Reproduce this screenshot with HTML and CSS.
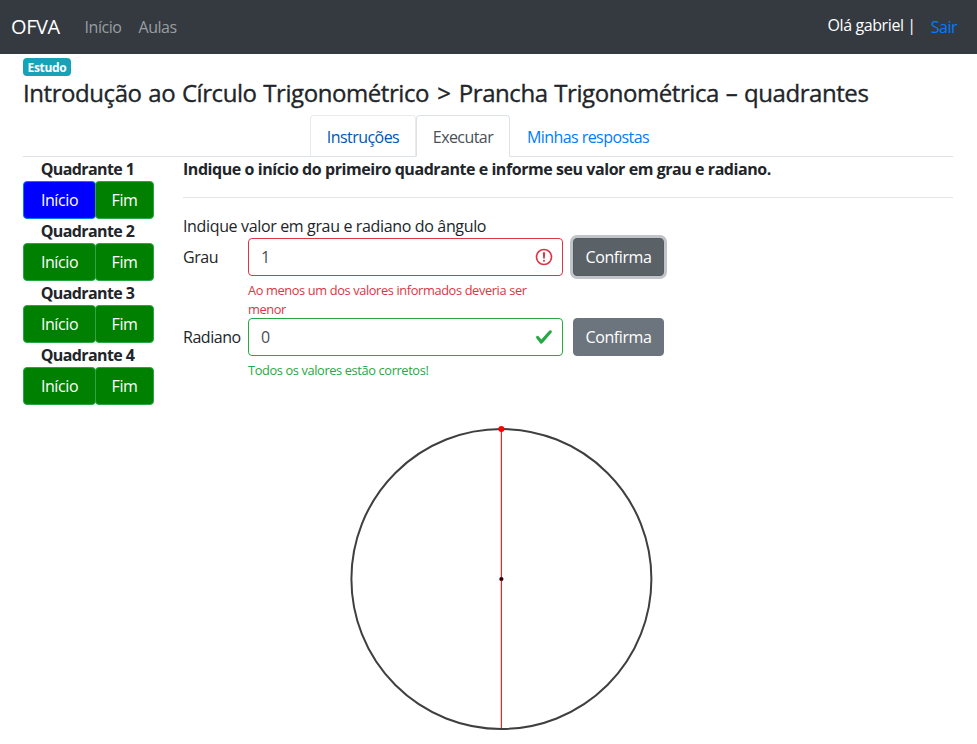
FILE: index.html
```html
<!DOCTYPE html>
<html lang="pt-BR">
<head>
<meta charset="utf-8">
<title>OFVA</title>
<link rel="stylesheet" href="styles.css">
</head>
<body>
<nav class="navbar">
  <a class="brand">OFVA</a>
  <a class="nav-link home">Início</a>
  <a class="nav-link">Aulas</a>
  <span class="greeting">Olá gabriel |</span>
  <a class="logout">Sair</a>
</nav>
<main class="container">
  <span class="badge">Estudo</span>
  <h4 class="title">Introdução ao Círculo Trigonométrico <span class="sep">&gt;</span> Prancha Trigonométrica – quadrantes</h4>
  <div class="tabs">
    <a class="tab hover">Instruções</a>
    <a class="tab active">Executar</a>
    <a class="tab last">Minhas respostas</a>
  </div>
  <div class="content">
    <aside class="quadrants">
      <b class="quad-label">Quadrante 1</b>
      <div class="group"><button class="btn start current">Início</button><button class="btn end">Fim</button></div>
      <b class="quad-label">Quadrante 2</b>
      <div class="group"><button class="btn start">Início</button><button class="btn end">Fim</button></div>
      <b class="quad-label">Quadrante 3</b>
      <div class="group"><button class="btn start">Início</button><button class="btn end">Fim</button></div>
      <b class="quad-label">Quadrante 4</b>
      <div class="group"><button class="btn start">Início</button><button class="btn end">Fim</button></div>
    </aside>
    <section class="work">
      <b class="question">Indique o início do primeiro quadrante e informe seu valor em grau e radiano.</b>
      <p class="prompt">Indique valor em grau e radiano do ângulo</p>
      <div class="row">
        <label>Grau</label>
        <div class="field">
          <div class="input invalid"><span>1</span>
            <svg class="icon" viewBox="0 0 12 12" fill="none" stroke="#dc3545"><circle cx="6" cy="6" r="4.5"/><path stroke-linejoin="round" d="M5.8 3.6h.4L6 6.5z"/><circle cx="6" cy="8.2" r=".6" fill="#dc3545" stroke="none"/></svg>
          </div>
          <div class="feedback bad">Ao menos um dos valores informados deveria ser<br>menor</div>
        </div>
        <button class="btn confirm focus">Confirma</button>
      </div>
      <div class="row">
        <label>Radiano</label>
        <div class="field">
          <div class="input valid"><span>0</span>
            <svg class="icon" viewBox="0 0 8 8"><path fill="#28a745" d="M2.3 6.73L.6 4.53c-.4-1.04.46-1.4 1.1-.8l1.1 1.4 3.4-3.8c.6-.63 1.6-.27 1.2.7l-4 4.6c-.43.5-.8.4-1.1.1z"/></svg>
          </div>
          <div class="feedback good">Todos os valores estão corretos!</div>
        </div>
        <button class="btn confirm">Confirma</button>
      </div>
      <svg class="board" width="310" height="310" viewBox="0 0 310 310">
        <circle cx="155.4" cy="155" r="150" fill="none" stroke="#3f3f3f" stroke-width="2"/>
        <circle cx="155.4" cy="155" r="2.1" fill="#200"/>
        <path d="M155.36 5v299" stroke="#f00" stroke-width="1.05"/>
        <circle cx="155.4" cy="155" r="1.6" fill="#200"/>
        <circle cx="155.4" cy="5" r="3" fill="#f00"/>
      </svg>
    </section>
  </div>
</main>
</body>
</html>
```
FILE: styles.css
```css
* { box-sizing: border-box; }
body {
  margin: 0;
  background: #fff;
  color: #212529;
  font: 16px/24px "Open Sans", "Noto Sans", sans-serif;
  letter-spacing: -0.35px;
  white-space: nowrap;
  overflow: hidden;
}
.navbar {
  height: 54px;
  background: #343a40;
  display: flex;
  align-items: center;
  padding: 0 20px 0 11px;
}
.brand { color: #fff; font-size: 20px; width: 73.5px; letter-spacing: -0.4px; }
.nav-link { color: #9a9da0; letter-spacing: -0.45px; }
.home { width: 54px; }
.greeting { color: #fff; margin-left: auto; padding-bottom: 5px; letter-spacing: -0.4px; }
.logout { color: #007bff; margin-left: 15px; padding-bottom: 1px; letter-spacing: -0.5px; }
.container { padding: 4px 24px 0 23px; }
.badge {
  display: flex;
  align-items: center;
  justify-content: center;
  width: 48px;
  height: 18px;
  border-radius: 4px;
  background: #17a2b8;
  color: #fff;
  font-size: 12px;
  line-height: 20px;
  padding-top: 2px;
  font-weight: 700;
  letter-spacing: -0.3px;
}
.title {
  margin: 2px 0 8px;
  font-size: 24px;
  line-height: 29px;
  font-weight: 500;
  letter-spacing: -0.43px;
  word-spacing: 0.9px;
  -webkit-text-stroke: 0.35px #212529;
}
.sep { margin: 0 1.5px; }
.tabs {
  display: flex;
  justify-content: center;
  border-bottom: 1px solid #dee2e6;
  height: 42px;
}
.tab {
  height: 42px;
  border: 1px solid transparent;
  border-radius: 4px 4px 0 0;
  padding: 9px 0 7px;
  text-align: center;
  color: #007bff;
  letter-spacing: -0.56px;
}
.tab.hover { width: 106px; color: #0056b3; border-color: #e9ecef #e9ecef #dee2e6; }
.tab.active { width: 94px; color: #495057; background: #fff; border-color: #dee2e6 #dee2e6 #fff; }
.tab.last { width: 156px; }
.content { display: flex; }
.quadrants { width: 160px; }
.quad-label { display: block; width: 129px; text-align: center; letter-spacing: -0.6px; }
.group { display: flex; }
.btn {
  height: 38px;
  padding: 0;
  border: 1px solid #28a745;
  border-radius: 4px;
  background: #008000;
  color: #fff;
  font: inherit;
  letter-spacing: -0.4px;
}
.start { width: 73px; }
.end { width: 59px; margin-left: -1px; }
.btn.current { background: #0000ff; border-color: #007bff; }
.work { flex: 1; }
.question { display: block; height: 41px; border-bottom: 1px solid #e3e4e5; letter-spacing: -0.44px; }
.prompt { margin: 16px 0 0; }
.row { display: grid; grid-template-columns: 65px 315px 101px; min-height: 80px; }
.row label { padding-top: 7px; letter-spacing: -0.45px; }
.input {
  display: flex;
  align-items: center;
  justify-content: space-between;
  height: 38px;
  border: 1px solid;
  border-radius: 4px;
  padding: 0 8px 0 12px;
  color: #495057;
}
.invalid { border-color: #dc3545; }
.valid { border-color: #28a745; padding-right: 9px; }
.icon { width: 20px; height: 20px; }
.valid .icon { width: 18px; height: 18px; }
.feedback { margin-top: 5px; font-size: 12.8px; line-height: 19px; letter-spacing: -0.37px; }
.bad { color: #dc3545; margin-bottom: -1px; }
.good { color: #28a745; }
.confirm { margin-left: 10px; width: 91px; background: #6c757d; border-color: #6c757d; }
.confirm.focus { background: #5a6268; border-color: #545b62; box-shadow: 0 0 0 3px #c1c5c9; }
.board { display: block; margin: 26px 0 0 163px; }
```
